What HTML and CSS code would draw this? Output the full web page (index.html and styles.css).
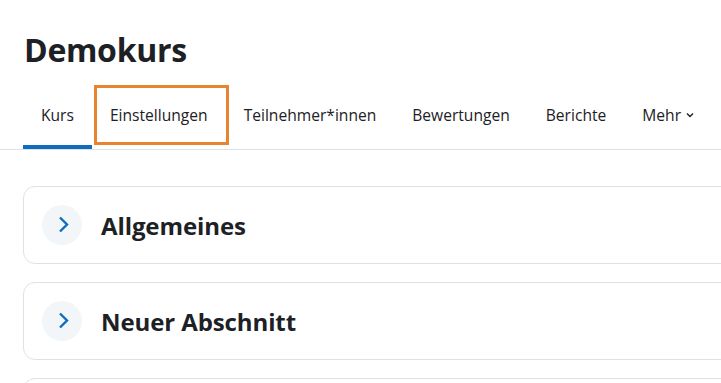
FILE: index.html
```html
<!DOCTYPE html>
<html lang="de">
<head>
  <meta charset="UTF-8" />
  <meta name="viewport" content="width=device-width, initial-scale=1" />
  <title>Demokurs</title>
  <link rel="stylesheet" href="styles.css">
</head>
<body>
  <!-- Kopfbereich -->
  <header class="page-header">
    <h1>Demokurs</h1>
  </header>

  <!-- Sekundäre Navigation -->
  <nav class="course-nav">
    <a class="nav-link active" href="#">Kurs</a>
    <a class="nav-link marked" href="#">Einstellungen</a>
    <a class="nav-link" href="#">Teilnehmer*innen</a>
    <a class="nav-link" href="#">Bewertungen</a>
    <a class="nav-link" href="#">Berichte</a>
    <a class="nav-link" href="#">Mehr
      <svg class="caret" width="10" height="10" viewBox="0 0 10 10"><path d="M2 3.5 L5 6.5 L8 3.5" fill="none" stroke="currentColor" stroke-width="1.4"/></svg>
    </a>
  </nav>

  <!-- Kursabschnitte -->
  <main class="sections">
    <div class="section-card">
      <span class="toggle">
        <svg width="40" height="40" viewBox="0 0 40 40"><path d="M18 12.5 L25 19.5 L18 26.5" fill="none" stroke="#0f6cbf" stroke-width="2.4"/></svg>
      </span>
      <h3>Allgemeines</h3>
    </div>
    <div class="section-card">
      <span class="toggle">
        <svg width="40" height="40" viewBox="0 0 40 40"><path d="M18 12.5 L25 19.5 L18 26.5" fill="none" stroke="#0f6cbf" stroke-width="2.4"/></svg>
      </span>
      <h3>Neuer Abschnitt</h3>
    </div>
    <div class="section-card">
      <span class="toggle"></span>
      <h3></h3>
    </div>
  </main>
</body>
</html>
```

FILE: styles.css
```css
body {
  font-family: "Open Sans", "Noto Sans", sans-serif;
  color: #1d2125;
  background: #fff;
  margin: 0;
  overflow: hidden;
}

.page-header {
  padding: 31px 24px 0;
}
.page-header h1 {
  margin: 0;
  font-size: 32px;
  font-weight: 700;
  line-height: 1.2;
  letter-spacing: -0.3px;
}

.course-nav {
  display: flex;
  margin-top: 18px;
  padding-left: 23px;
  border-bottom: 1px solid #dee2e6;
}
.nav-link {
  position: relative;
  display: flex;
  align-items: center;
  padding: 17px 18px 19px;
  border-bottom: 4px solid transparent;
  font-size: 15.6px;
  line-height: 22px;
  color: #1d2125;
  text-decoration: none;
}
.nav-link.active {
  border-bottom-color: #0f6cbf;
}
/* Markierung um "Einstellungen" */
.nav-link.marked::after {
  content: "";
  position: absolute;
  top: -2px;
  left: 2px;
  right: -3px;
  bottom: 0;
  border: 3px solid #e8832f;
}
.caret {
  margin-left: 4px;
}

.sections {
  width: 760px;
  padding: 36px 0 0 23px;
}
.section-card {
  display: flex;
  align-items: center;
  gap: 19px;
  padding: 18px;
  margin-bottom: 18px;
  border: 1px solid #dee2e6;
  border-radius: 12px;
}
.toggle {
  width: 40px;
  height: 40px;
  border-radius: 50%;
  background: #f3f6f9;
  flex-shrink: 0;
}
.toggle svg {
  display: block;
}
.section-card h3 {
  margin: 0;
  font-size: 24px;
  font-weight: 700;
  letter-spacing: -0.1px;
}
```
